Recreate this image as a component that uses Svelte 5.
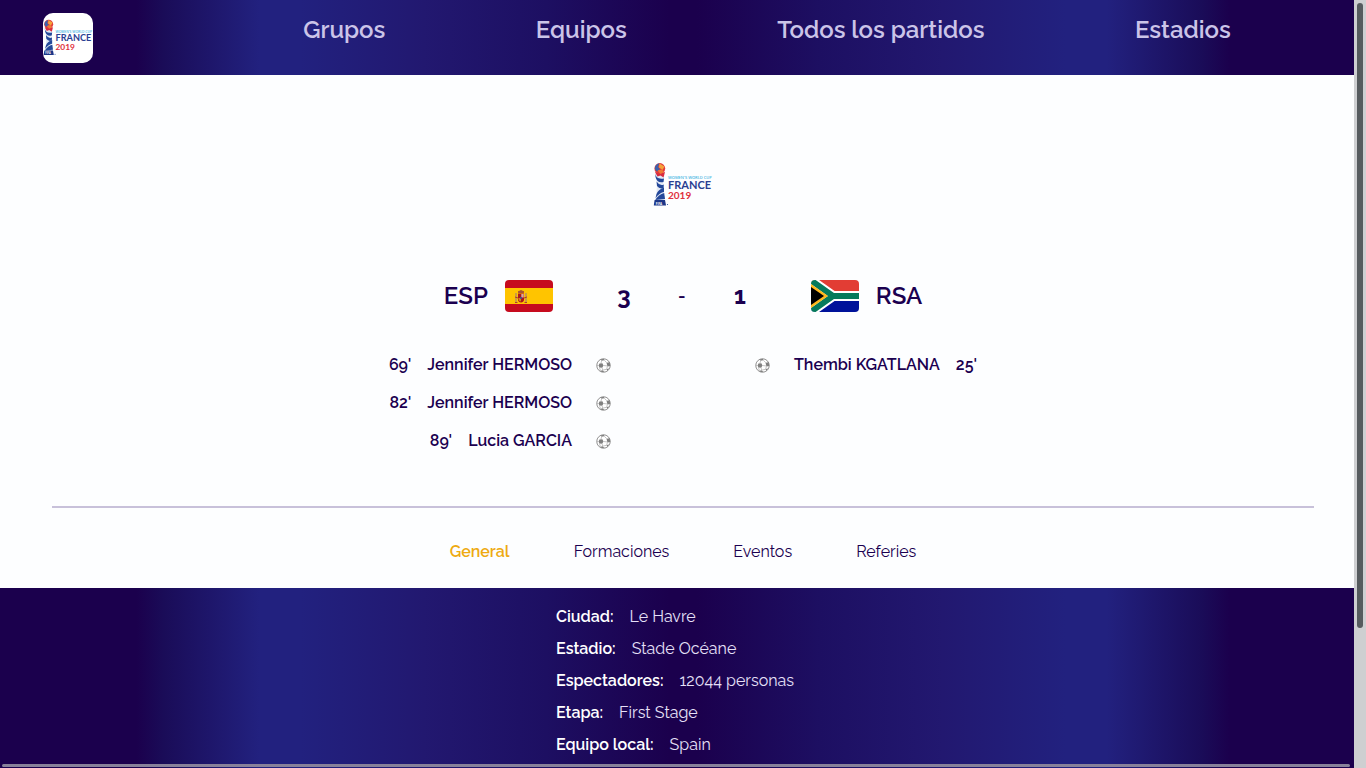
<script>
  const links = ['Grupos', 'Equipos', 'Todos los partidos', 'Estadios'];
  const homeGoals = [
    { minute: "69'", player: 'Jennifer HERMOSO' },
    { minute: "82'", player: 'Jennifer HERMOSO' },
    { minute: "89'", player: 'Lucia GARCIA' }
  ];
  const awayGoals = [{ minute: "25'", player: 'Thembi KGATLANA' }];
  const tabs = ['General', 'Formaciones', 'Eventos', 'Referies'];
  const facts = [
    ['Ciudad:', 'Le Havre'],
    ['Estadio:', 'Stade Océane'],
    ['Espectadores:', '12044 personas'],
    ['Etapa:', 'First Stage'],
    ['Equipo local:', 'Spain']
  ];
  let active = $state('General');
</script>

{#snippet emblem()}
  <svg class="emblem" viewBox="0 0 60 48" role="img" aria-label="Women's World Cup France 2019">
    <path d="M2.500 13 L11.500 13 L10.300 22 L10.800 33 L12.500 44 L1 44 L3.500 33 L4 22 Z" fill="#e3e9f5" />
    <path d="M2 11.500 Q2.500 19 11 17.500 L10.500 21 Q4 22.500 2.500 16 Z" fill="#24489a" />
    <path d="M3.500 20.500 Q7 25.500 10.800 23.500 L10.600 27 Q6.500 28.500 4 25 Z" fill="#24489a" />
    <path d="M11 26.500 Q5 28.500 3.500 33 L2.500 37 Q7 31.500 11 31 Z" fill="#24489a" />
    <path d="M11.200 32 Q5.500 33.500 2.300 39 L12 38 Z" fill="#24489a" />
    <path d="M1.600 39 H12 L13 44.500 H.8 Z" fill="#1c3688" />
    <path d="M2 11 L4.500 15.500 L7.500 14.500 L10.500 16.500 L12 11 L8 12 Z" fill="#d92b3f" />
    <circle cx="6.800" cy="7.500" r="5.400" fill="#e33b3c" />
    <path d="M2.300 5 Q4 2.500 6.500 2.300 L5 6 L7 8 L4 10.500 Q1 9 2.300 5 Z" fill="#3b62ab" />
    <path d="M6.500 2.500 L11.500 5.500 L9.500 9 L6 6.500 Z" fill="#f4a23a" />
    <path d="M4.500 9.500 L9 8.500 L11 11 L7.500 13 Z" fill="#f07a34" />
    <text x="2.800" y="43.500" class="tiny">FIFA</text>
    <text x="15" y="17.500" class="cup">WOMEN'S WORLD CUP</text>
    <text x="15" y="27.500" class="france">FRANCE</text>
    <text x="15" y="38" class="year">2019</text>
    <circle cx="14.500" cy="43.500" r=".6" fill="#24489a" />
  </svg>
{/snippet}

{#snippet ball()}
  <svg class="ball" viewBox="0 0 16 16" aria-hidden="true">
    <circle cx="8" cy="8" r="7.200" fill="#fff" stroke="#8a8a8a" />
    <path d="M3.600 5.800 L6.800 5.600 L8 8 L6.600 10.500 L3.600 10 L2.800 8 Z M11.200 5 L14.600 4.600 L15.200 8.400 L12.200 9 Z M4.500 1.600 L8.500 .9 L8.800 2.400 L6 3 Z M4.800 13.600 L7 13 L9 15 L6 14.800 Z M11.300 12 L13.900 11 L12 13.900 Z" fill="#808080" />
    <path d="M5.200 6 L6 3 M8.800 2.400 L11.500 5 M8 8 L12.200 8.500 M12.200 9 L11.300 12 L7 13 L6.600 10.500 M3.600 10 L4.800 13.600 M2.800 8 L1 8" fill="none" stroke="#a5a5a5" stroke-width=".7" />
  </svg>
{/snippet}

<div class="page">
  <header class="bar">
    <a class="brand" href="#inicio" aria-label="Inicio">{@render emblem()}</a>
    <nav class="links">
      {#each links as link}
        <a href="#{link}">{link}</a>
      {/each}
    </nav>
  </header>

  <main>
    <section class="match">
      <div class="crest">{@render emblem()}</div>

      <div class="score">
        <div class="team">
          <span>ESP</span>
          <svg class="flag" viewBox="0 0 48 32" role="img" aria-label="España">
            <rect width="48" height="32" fill="#c60b1e" />
            <rect y="8" width="48" height="16" fill="#ffc400" />
            <path d="M11 13 V22 M21 13 V22" stroke="#b9905a" stroke-width="1.500" />
            <path d="M10 22.500 h2.500 M19.500 22.500 h2.500 M10 17 l3 1 M19 18 l3 -1" stroke="#ad3a2c" stroke-width="1" />
            <path d="M13 13.500 h6 v6 q0 2.500 -3 3 q-3 -.5 -3 -3 z" fill="#ad1519" />
            <path d="M16.300 14 h2.400 v3.500 h-2.400 z" fill="#d9a9a4" />
            <path d="M13.400 18 h2.600 v3.500 q-2.400 -.5 -2.600 -2.500 z" fill="#d18a19" />
            <path d="M13.200 13 q-1 -2.500 1.500 -2.300 q1.300 -1.200 2.600 0 q2.500 -.2 1.500 2.300 z" fill="#a85332" />
            <circle cx="16" cy="18" r="1.100" fill="#3d5a8c" />
          </svg>
        </div>
        <div class="result">
          <strong>3</strong><span>-</span><strong>1</strong>
        </div>
        <div class="team">
          <svg class="flag" viewBox="0 0 48 32" role="img" aria-label="Sudáfrica">
            <rect width="48" height="16" fill="#e23d34" />
            <rect y="16" width="48" height="16" fill="#00129a" />
            <path d="M-2 -1 L22 16 L-2 33 M22 16 H48" fill="none" stroke="#fff" stroke-width="10" />
            <path d="M-2 -1 L22 16 L-2 33 M22 16 H48" fill="none" stroke="#067a5c" stroke-width="6" />
            <path d="M0 4 L17 16 L0 28 Z" fill="#ffb81c" />
            <path d="M0 7 L13 16 L0 25 Z" fill="#000" />
          </svg>
          <span>RSA</span>
        </div>
      </div>

      <div class="goals">
        <ul class="home">
          {#each homeGoals as goal}
            <li>
              <span>{goal.minute}</span>
              <span class="player">{goal.player}</span>
              {@render ball()}
            </li>
          {/each}
        </ul>
        <ul>
          {#each awayGoals as goal}
            <li>
              {@render ball()}
              <span class="player">{goal.player}</span>
              <span>{goal.minute}</span>
            </li>
          {/each}
        </ul>
      </div>

      <hr />

      <div class="tabs">
        {#each tabs as tab}
          <button type="button" class:active={active === tab} onclick={() => (active = tab)}>{tab}</button>
        {/each}
      </div>
    </section>

    <section class="details">
      <dl>
        {#each facts as [label, value]}
          <div>
            <dt>{label}</dt>
            <dd>{value}</dd>
          </div>
        {/each}
      </dl>
    </section>
  </main>

  <div class="track" aria-hidden="true"><span></span></div>
  <div class="rail" aria-hidden="true"></div>
</div>

<style>
  :global(body) {
    background: #fdfeff;
  }

  .page {
    --stripes: linear-gradient(
      90deg,
      #1b004d 10%,
      #1a0c58 12%,
      #22217f 19%,
      #22217f 22%,
      #221870 31%,
      #1d0f62 40%,
      #1b004d 49%,
      #1b004d 51%,
      #1d0f62 60%,
      #221870 69%,
      #22217f 78%,
      #22217f 81%,
      #1a0c58 88%,
      #1b004d 90%
    );
    height: 100vh;
    overflow: hidden;
    font-family: Raleway, 'Open Sans', sans-serif;
    font-size: 16px;
    line-height: 24px;
    color: #1b0050;
  }

  .bar {
    display: flex;
    align-items: center;
    box-sizing: border-box;
    height: 75px;
    padding: 0 60px 0 43px;
    background: var(--stripes);
  }

  .brand {
    display: flex;
    align-items: center;
    width: 50px;
    height: 50px;
    border-radius: 10px;
    background: #fff;
    overflow: hidden;
  }

  .emblem {
    display: block;
    width: 100%;
  }

  .cup {
    font: 600 4px 'Open Sans', sans-serif;
    fill: #45b5e2;
  }

  .france {
    font: 700 11px Lato, sans-serif;
    fill: #2a3f92;
  }

  .year {
    font: 700 10px Lato, sans-serif;
    fill: #e0303c;
  }

  .tiny {
    font: 700 3px 'Open Sans', sans-serif;
    fill: #fff;
  }

  .links {
    display: flex;
    flex: 1;
    align-self: flex-start;
    justify-content: space-around;
    margin-left: 135px;
    padding-top: 12px;
  }

  .links a {
    color: #cbc4e8;
    font-size: 24px;
    font-weight: 600;
    line-height: 36px;
    text-decoration: none;
  }

  .match {
    display: flex;
    flex-direction: column;
    padding: 86px 52px 24px;
  }

  .crest {
    align-self: center;
    width: 60px;
    height: 48px;
  }

  .score {
    display: flex;
    align-items: center;
    justify-content: center;
    gap: 42px;
    margin-top: 68px;
    font-size: 24px;
    font-weight: 600;
    line-height: 38px;
  }

  .team {
    display: flex;
    align-items: center;
    gap: 17px;
  }

  .flag {
    width: 48px;
    height: 32px;
    border-radius: 4px;
  }

  .result {
    display: grid;
    grid-template-columns: repeat(3, 58px);
    justify-content: center;
    text-align: center;
  }

  .result strong {
    font-weight: 700;
  }

  .result span {
    font-size: 18px;
  }

  .goals {
    display: grid;
    grid-template-columns: 1fr 1fr;
    gap: 144px;
    min-height: 152px;
    margin-top: 31px;
    font-weight: 600;
  }

  ul {
    margin: 0;
    padding: 0;
    list-style: none;
  }

  li {
    display: flex;
    align-items: center;
    gap: 16px;
    height: 38px;
  }

  .goals .home li {
    justify-content: flex-end;
  }

  .home .player {
    margin-right: 8px;
  }

  .ball + .player {
    margin-left: 8px;
  }

  .ball {
    width: 15px;
    height: 15px;
  }

  hr {
    align-self: stretch;
    height: 2px;
    margin: 8px 0 32px;
    border: 0;
    background: #c8c1da;
  }

  .tabs {
    display: flex;
    justify-content: center;
    gap: 64px;
  }

  button {
    padding: 0;
    border: 0;
    background: none;
    color: inherit;
    font: inherit;
    cursor: pointer;
  }

  button.active {
    color: #eeaa11;
    font-weight: 600;
  }

  .details {
    display: flex;
    justify-content: center;
    padding: 13px 0 64px;
    background: var(--stripes);
    color: #e6e0f8;
  }

  dl {
    width: 254px;
    margin: 0;
    white-space: nowrap;
  }

  dl div {
    display: flex;
    gap: 16px;
    height: 32px;
    align-items: center;
    line-height: 32px;
  }

  dt {
    color: #fff;
    font-weight: 600;
  }

  dd {
    margin: 0;
  }

  .track {
    position: fixed;
    inset: 0 0 0 auto;
    box-sizing: border-box;
    width: 12px;
    padding: 3px;
    background: #cecfd1;
  }

  .track span {
    display: block;
    height: 82%;
    border-radius: 3px;
    background: #565b5e;
  }

  .rail {
    position: fixed;
    right: 16px;
    bottom: 1px;
    left: 2px;
    height: 3px;
    border-radius: 2px;
    background: #88819a;
  }
</style>
